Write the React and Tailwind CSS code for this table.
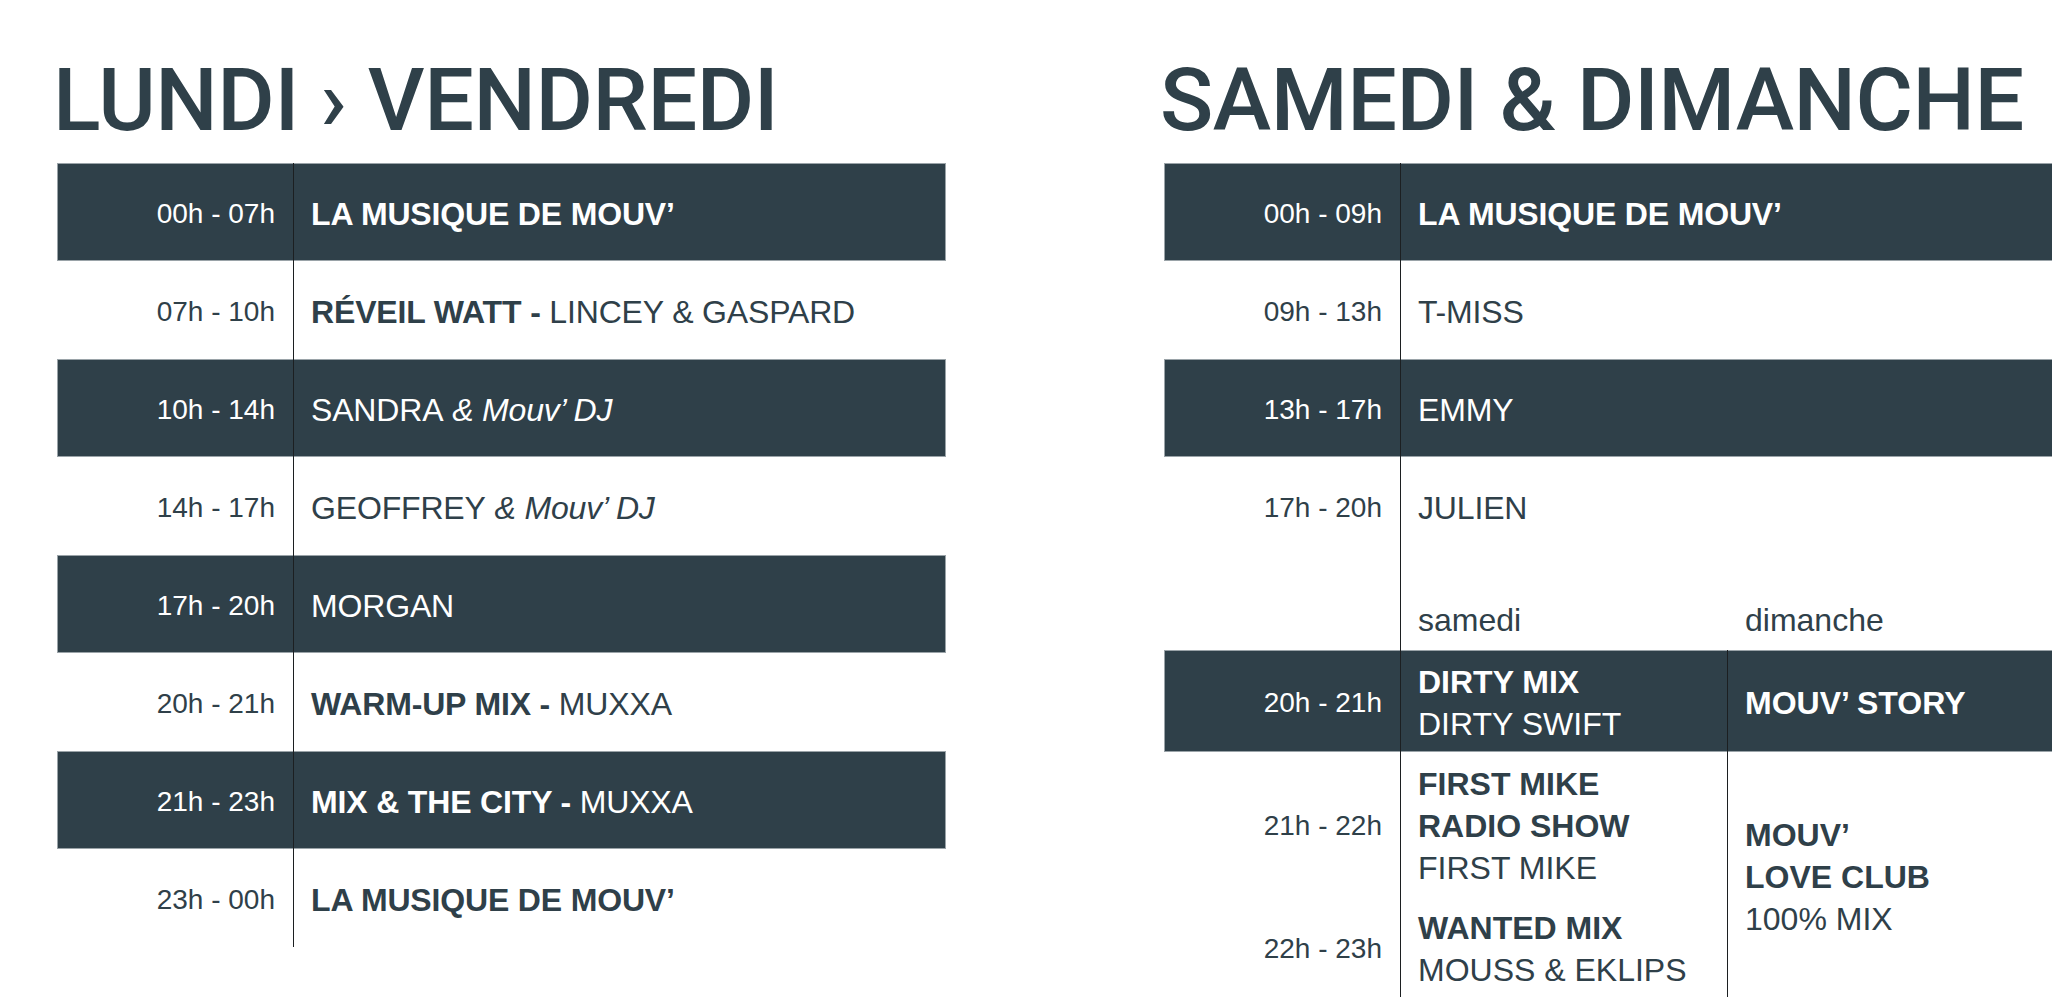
import React from "react";

const DARK = "bg-[#2f4049] text-white shadow-[inset_0_0_0_1px_#9aa3a8]";
const LIGHT = "text-[#2f4049]";

function Row({ dark, time, children }) {
  return (
    <div className={`flex h-[98px] ${dark ? DARK : LIGHT}`}>
      <div className="w-[236px] shrink-0 flex items-center justify-end pr-[18px] pt-[3px] text-[28px] whitespace-nowrap">
        {time}
      </div>
      <div className="flex-1 border-l border-[#1c1f21] flex items-center pl-[17px] pt-[4px] text-[32px] tracking-[-0.005em] whitespace-nowrap">
        {children}
      </div>
    </div>
  );
}

function Heading({ children }) {
  return (
    <h1 className="font-['Roboto',sans-serif] font-medium text-[88px] leading-[86px] tracking-[-0.005em] text-[#2f4049] whitespace-nowrap -ml-[4px]">
      {children}
    </h1>
  );
}

export default function App() {
  return (
    <div className="w-[2052px] h-[997px] overflow-hidden bg-white flex pl-[57px] pt-[57px] gap-[218px] font-['Liberation_Sans',Arial,sans-serif]">
      {/* Lundi - Vendredi */}
      <div className="w-[889px] shrink-0 flex flex-col">
        <Heading>LUNDI › VENDREDI</Heading>
        <div className="mt-[20px] flex flex-col">
          <Row dark time="00h - 07h">
            <b>LA MUSIQUE DE MOUV’</b>
          </Row>
          <Row time="07h - 10h">
            <b>RÉVEIL WATT -</b>&nbsp;LINCEY &amp; GASPARD
          </Row>
          <Row dark time="10h - 14h">
            SANDRA&nbsp;<i>&amp; Mouv’ DJ</i>
          </Row>
          <Row time="14h - 17h">
            GEOFFREY&nbsp;<i>&amp; Mouv’ DJ</i>
          </Row>
          <Row dark time="17h - 20h">
            MORGAN
          </Row>
          <Row time="20h - 21h">
            <b>WARM-UP MIX -</b>&nbsp;MUXXA
          </Row>
          <Row dark time="21h - 23h">
            <b>MIX &amp; THE CITY -</b>&nbsp;MUXXA
          </Row>
          <Row time="23h - 00h">
            <b>LA MUSIQUE DE MOUV’</b>
          </Row>
        </div>
      </div>

      {/* Samedi & Dimanche */}
      <div className="w-[889px] shrink-0 flex flex-col">
        <Heading>SAMEDI &amp; DIMANCHE</Heading>
        <div className="mt-[20px] flex flex-col flex-1">
          <Row dark time="00h - 09h">
            <b>LA MUSIQUE DE MOUV’</b>
          </Row>
          <Row time="09h - 13h">T-MISS</Row>
          <Row dark time="13h - 17h">
            EMMY
          </Row>
          <Row time="17h - 20h">JULIEN</Row>

          {/* sub header */}
          <div className={`flex h-[95px] ${LIGHT}`}>
            <div className="w-[236px] shrink-0" />
            <div className="flex-1 border-l border-[#1c1f21] flex items-end pb-[9px] text-[32px] leading-[42px]">
              <div className="w-[326px] shrink-0 pl-[17px]">samedi</div>
              <div className="pl-[18px]">dimanche</div>
            </div>
          </div>

          {/* 20h - 21h */}
          <div className={`flex h-[102px] ${DARK}`}>
            <div className="w-[236px] shrink-0 flex items-center justify-end pr-[18px] pt-[3px] text-[28px] whitespace-nowrap">
              20h - 21h
            </div>
            <div className="flex-1 border-l border-[#1c1f21] flex text-[32px] leading-[42px] whitespace-nowrap">
              <div className="w-[326px] shrink-0 pl-[17px] pt-[3px] flex flex-col justify-center">
                <b>DIRTY MIX</b>
                <span>DIRTY SWIFT</span>
              </div>
              <div className="flex-1 border-l border-[#1c1f21] pl-[17px] pt-[3px] flex items-center">
                <b>MOUV’ STORY</b>
              </div>
            </div>
          </div>

          {/* 21h - 23h */}
          <div className={`flex flex-1 ${LIGHT}`}>
            <div className="w-[236px] shrink-0 flex flex-col text-[28px] whitespace-nowrap">
              <div className="h-[144px] flex items-center justify-end pr-[18px] pt-[3px]">21h - 22h</div>
              <div className="h-[102px] flex items-center justify-end pr-[18px] pt-[3px]">22h - 23h</div>
            </div>
            <div className="flex-1 border-l border-[#1c1f21] flex text-[32px] leading-[42px] whitespace-nowrap">
              <div className="w-[326px] shrink-0 flex flex-col">
                <div className="h-[144px] pl-[17px] pt-[3px] flex flex-col justify-center">
                  <b>FIRST MIKE</b>
                  <b>RADIO SHOW</b>
                  <span>FIRST MIKE</span>
                </div>
                <div className="h-[102px] pl-[17px] pt-[3px] flex flex-col justify-center">
                  <b>WANTED MIX</b>
                  <span>MOUSS &amp; EKLIPS</span>
                </div>
              </div>
              <div className="flex-1 border-l border-[#1c1f21] pl-[17px] pt-[3px] flex flex-col justify-center">
                <b>MOUV’</b>
                <b>LOVE CLUB</b>
                <span>100% MIX</span>
              </div>
            </div>
          </div>
        </div>
      </div>
    </div>
  );
}
